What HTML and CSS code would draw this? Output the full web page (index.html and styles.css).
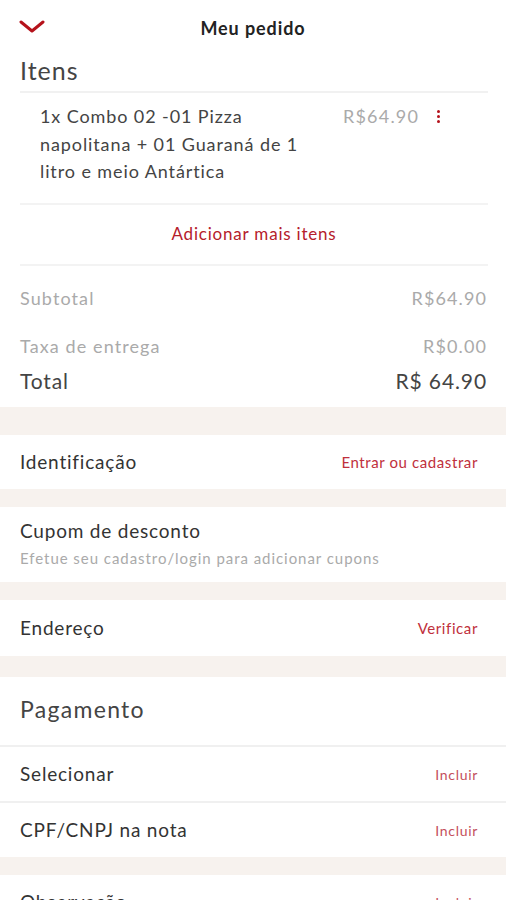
FILE: index.html
```html
<!DOCTYPE html>
<html>
<head>
  <title>Meu pedido</title>
  <link rel="stylesheet" href="styles.css">
</head>
<body>
  <header class="topbar">
    <svg class="back" width="26" height="14" viewBox="0 0 26 14">
      <path d="M2 2 L13 11 L24 2" fill="none" stroke="#b5121b" stroke-width="3" stroke-linecap="round" stroke-linejoin="round"/>
    </svg>
    <h1>Meu pedido</h1>
  </header>

  <section class="order">
    <h2 class="section-title">Itens</h2>
    <div class="item">
      <div class="item-name">1x Combo 02 -01 Pizza napolitana + 01 Guaraná de 1 litro e meio Antártica</div>
      <div class="item-price">R$64.90</div>
      <div class="item-menu"><span></span><span></span><span></span></div>
    </div>
    <div class="add-more">Adicionar mais itens</div>
    <div class="summary">
      <div class="sum-row sub"><span>Subtotal</span><span>R$64.90</span></div>
      <div class="sum-row fee"><span>Taxa de entrega</span><span>R$0.00</span></div>
      <div class="sum-row total"><span>Total</span><span>R$ 64.90</span></div>
    </div>
  </section>

  <div class="gap gap-lg"></div>

  <div class="row">
    <span class="label">Identificação</span>
    <a class="action" href="#">Entrar ou cadastrar</a>
  </div>

  <div class="gap"></div>

  <div class="row row-coupon">
    <div>
      <div class="label">Cupom de desconto</div>
      <div class="hint">Efetue seu cadastro/login para adicionar cupons</div>
    </div>
  </div>

  <div class="gap"></div>

  <div class="row row-address">
    <span class="label">Endereço</span>
    <a class="action" href="#">Verificar</a>
  </div>

  <div class="gap gap-md"></div>

  <div class="row row-title">
    <span class="title">Pagamento</span>
  </div>
  <div class="line"></div>
  <div class="row">
    <span class="label">Selecionar</span>
    <a class="action small" href="#">Incluir</a>
  </div>
  <div class="line"></div>
  <div class="row">
    <span class="label">CPF/CNPJ na nota</span>
    <a class="action small" href="#">Incluir</a>
  </div>

  <div class="gap"></div>

  <div class="row">
    <span class="label">Observação</span>
    <a class="action small" href="#">Incluir</a>
  </div>
</body>
</html>
```

FILE: styles.css
```css
body {
  font-family: Lato, "Open Sans", sans-serif;
  margin: 0;
  padding: 0;
  background: white;
  color: #333;
  width: 506px;
  overflow: hidden;
}
.topbar {
  height: 56px;
  display: flex;
  align-items: center;
  justify-content: center;
  position: relative;
}
.topbar .back {
  position: absolute;
  left: 19px;
  top: 20px;
}
.topbar h1 {
  margin: 0;
  font-size: 18px;
  font-weight: bold;
  letter-spacing: 0.9px;
  color: #222;
}
.order {
  padding: 0 18px 0 20px;
}
.section-title {
  margin: 0;
  font-size: 25px;
  font-weight: normal;
  letter-spacing: 1px;
  color: #444;
  height: 35px;
  line-height: 29px;
  border-bottom: 2px solid #f1f1f1;
}
.item {
  display: flex;
  padding: 10px 0 0 20px;
  height: 112px;
  box-sizing: border-box;
  border-bottom: 2px solid #f3f3f3;
}
.item-name {
  width: 285px;
  font-size: 18px;
  letter-spacing: 0.9px;
  line-height: 27.5px;
  color: #444;
}
.item-price {
  margin-left: 18px;
  font-size: 18px;
  letter-spacing: 1.2px;
  line-height: 27.5px;
  color: #aaa;
}
.item-menu {
  margin-left: 18px;
  margin-top: 7px;
  display: flex;
  flex-direction: column;
  gap: 2px;
}
.item-menu span {
  width: 3px;
  height: 3px;
  border-radius: 50%;
  background: #b5121b;
}
.add-more {
  text-align: center;
  color: #b5202b;
  font-size: 17px;
  letter-spacing: 0.8px;
  height: 59px;
  line-height: 57px;
  border-bottom: 2px solid #f3f3f3;
}
.summary {
  padding-right: 1px;
  padding-bottom: 7px;
}
.sum-row {
  display: flex;
  justify-content: space-between;
  font-size: 18px;
  letter-spacing: 1.1px;
  color: #aaa;
}
.sum-row.sub {
  height: 64px;
  line-height: 64px;
}
.sum-row.fee {
  height: 32px;
  line-height: 32px;
}
.sum-row.total {
  font-size: 21px;
  letter-spacing: 0.9px;
  color: #444;
  height: 38px;
  line-height: 38px;
}
.gap {
  height: 18px;
  background: #f7f2ee;
}
.gap-lg {
  height: 28px;
}
.gap-md {
  height: 21px;
}
.row {
  display: flex;
  justify-content: space-between;
  align-items: center;
  height: 54px;
  padding: 0 28px 0 20px;
}
.row-coupon {
  height: 75px;
  align-items: flex-start;
}
.row-coupon > div {
  padding-top: 13px;
}
.row-address {
  height: 56px;
}
.row-title {
  height: 68px;
  box-sizing: border-box;
  padding-bottom: 4px;
}
.label {
  font-size: 19px;
  letter-spacing: 0.8px;
  line-height: 22px;
  color: #333;
}
.title {
  font-size: 23px;
  letter-spacing: 1.3px;
  color: #444;
}
.hint {
  font-size: 15px;
  letter-spacing: 0.95px;
  line-height: 18px;
  color: #aaa;
  margin-top: 7px;
}
.action {
  color: #c0303c;
  font-size: 15px;
  letter-spacing: 0.6px;
  text-decoration: none;
}
.action.small {
  font-size: 14px;
  letter-spacing: 0.7px;
  color: #c4505c;
}
.line {
  height: 2px;
  background: #f0f0f0;
}
```
